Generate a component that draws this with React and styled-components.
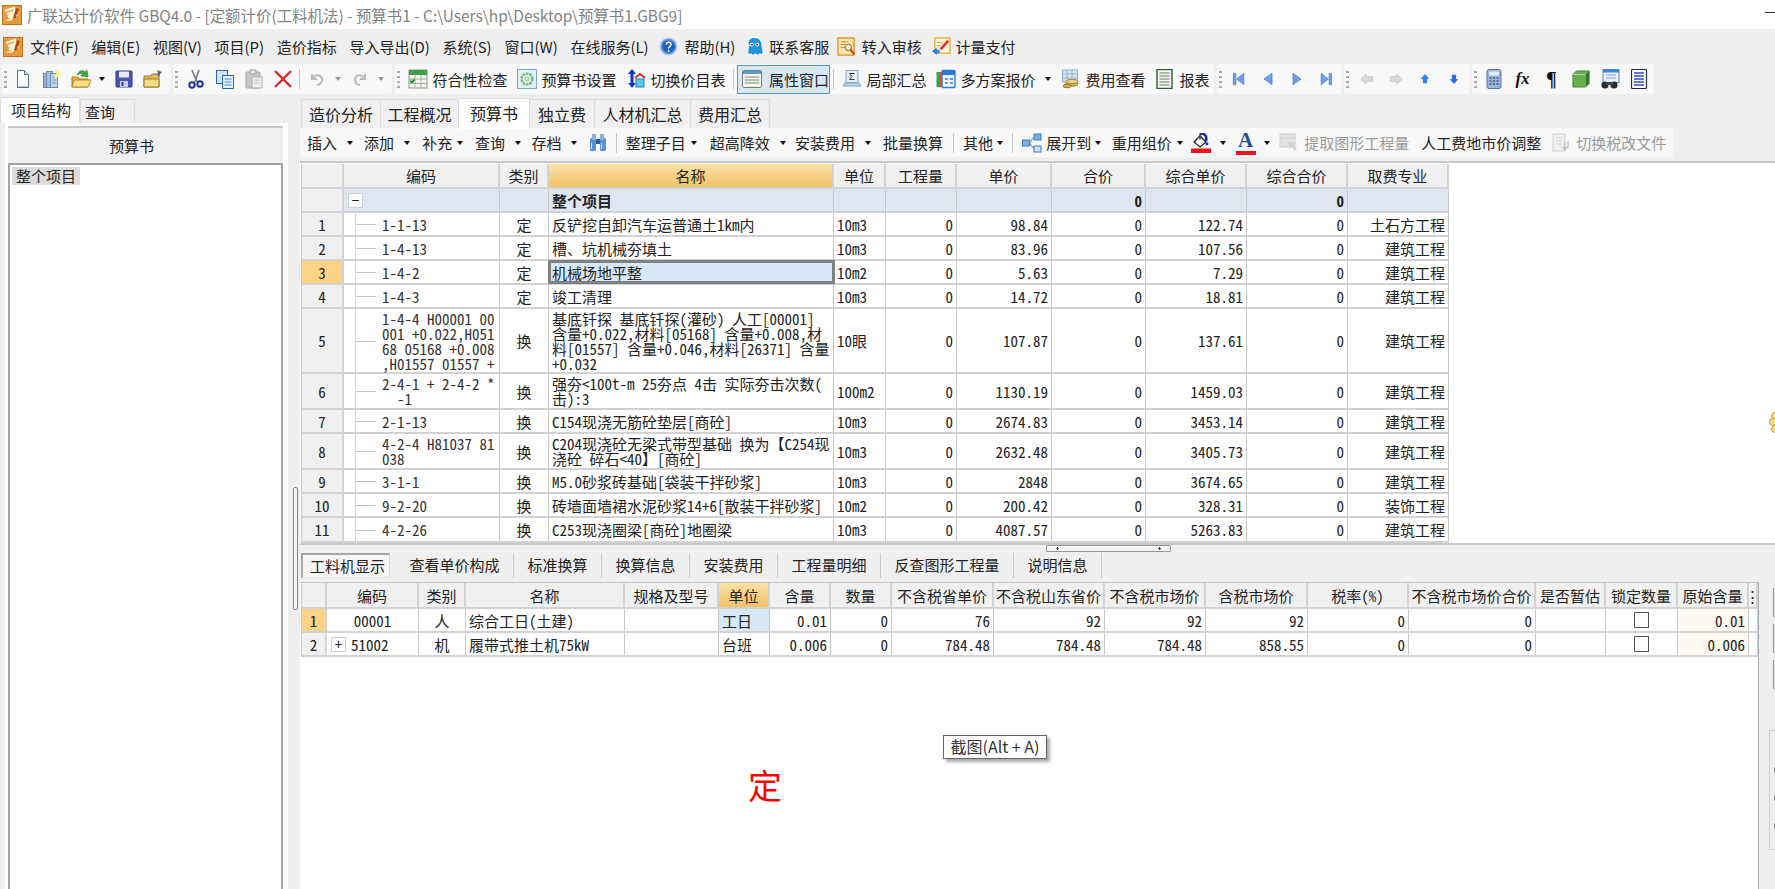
import React from "react"
import styled, { createGlobalStyle } from "styled-components"

const GlobalStyle = createGlobalStyle`
  html, body {
    margin: 0;
    padding: 0;
    background: #efefef;
  }
  * {
    box-sizing: border-box;
  }
  body {
    font-family: "Noto Sans CJK SC", "Noto Sans", sans-serif;
    font-size: 15px;
    color: #222;
  }
`

const Window = styled.div`
  position: relative;
  width: 1775px;
  height: 889px;
  overflow: hidden;
  display: flex;
  flex-direction: column;
`

const TitleBar = styled.div`
  height: 29px;
  background: #fff;
  display: flex;
  align-items: center;
  padding-left: 2px;
  color: #828282;
  font-size: 15.45px;
  white-space: nowrap;
`
const TitleText = styled.span`
  margin-left: 5px;
  flex: 1;
`
const MinLine = styled.span`
  width: 10px;
  height: 1px;
  background: #333;
  margin-bottom: 4px;
`

const MenuBar = styled.div`
  height: 35px;
  display: flex;
  align-items: center;
  padding-left: 3px;
  gap: 12.7px;
  white-space: nowrap;
`
const MenuItem = styled.span`
  display: flex;
  align-items: center;
  gap: ${p => p.$gap || 6}px;
  margin-left: ${p => p.$ml || 0}px;
`

const ToolRow = styled.div`
  height: 30px;
  display: flex;
  gap: 3px;
  padding-left: 2px;
  white-space: nowrap;
`
const ToolGroup = styled.div`
  height: 30px;
  display: flex;
  align-items: center;
  background: #f8f8f8;
  border-radius: 3px;
  width: ${p => p.$w}px;
`
const Grip = styled.i`
  width: ${p => p.$w || 7}px;
  height: 18px;
  flex: none;
  background: radial-gradient(circle at 2.5px 2px, #a8a8a8 1.2px, transparent 1.4px) 1px 0 / 5px 5px repeat-y;
`
const IconBtn = styled.span`
  width: ${p => p.$w || 29}px;
  height: 26px;
  flex: none;
  display: flex;
  align-items: center;
  justify-content: center;
`
const ToolText = styled.span`
  display: flex;
  align-items: center;
  gap: ${p => p.$gap || 5}px;
  padding: 0 4.5px;
`
const ActiveTool = styled.span`
  height: 29px;
  width: 94px;
  display: flex;
  align-items: center;
  gap: 7px;
  padding-left: 4px;
  background: #d8e8f6;
  border: 1px solid #4f97d8;
`
const ToolSep = styled.i`
  width: 1px;
  height: 20px;
  background: #c6c6c6;
  flex: none;
  margin: 0 ${p => p.$m || 3}px;
`
const Caret = styled.i`
  width: 0;
  height: 0;
  flex: none;
  border-left: 3.5px solid transparent;
  border-right: 3.5px solid transparent;
  border-top: 4px solid ${p => (p.$off ? "#999" : "#111")};
`

const Body = styled.div`
  flex: 1;
  display: flex;
  min-height: 0;
`

const LeftPane = styled.div`
  width: 292px;
  flex: none;
  display: flex;
  flex-direction: column;
  padding-top: 3px;
`
const LeftTabs = styled.div`
  height: 26px;
  display: flex;
  align-items: flex-end;
`
const LeftTab = styled.div`
  height: ${p => (p.$active ? 26 : 24)}px;
  width: ${p => p.$w}px;
  background: ${p => (p.$active ? "#fff" : "#f0f0f0")};
  border: 1px solid #dcdcdc;
  border-bottom: 0;
  padding-left: ${p => (p.$active ? 10 : 4)}px;
  line-height: 23px;
`
const LeftPanel = styled.div`
  flex: 1;
  width: 288px;
  padding: 3px 5px 0 8px;
  background: linear-gradient(#fff, #fff) 5px 0 / 283px 100% no-repeat;
  display: flex;
  flex-direction: column;
`
const PanelHead = styled.div`
  height: 37px;
  background: #f0f0f0;
  border-top: 2px solid #c8c8c8;
  text-align: center;
  padding-right: 28px;
  line-height: 36px;
`
const TreeBox = styled.div`
  flex: 1;
  background: #fff;
  border: 2px solid #a4a4a4;
  border-bottom: 0;
  padding: 0 0 0 2px;
`
const TreeNode = styled.span`
  display: inline-block;
  height: 18px;
  line-height: 18px;
  padding: 0 4px;
  background: #dcdcdc;
`
const SplitCol = styled.div`
  width: 8px;
  flex: none;
  padding-top: 393px;
`
const SplitHandle = styled.div`
  width: 5px;
  height: 123px;
  margin-left: 1px;
  border: 1px solid #888;
  border-radius: 2px;
  background: #f4f4f4;
`

const MainPane = styled.div`
  flex: 1;
  min-width: 0;
  display: flex;
  flex-direction: column;
`
const TabRow = styled.div`
  height: 34px;
  padding: 3px 0 0 1px;
  display: flex;
  align-items: flex-end;
  white-space: nowrap;
`
const Tab = styled.div`
  width: ${p => p.$w}px;
  height: ${p => (p.$active ? 31 : 29)}px;
  margin-bottom: ${p => (p.$active ? -1 : 0)}px;
  font-size: 16px;
  line-height: 28px;
  text-align: center;
  background: ${p => (p.$active ? "#fff" : "#f0f0f0")};
  border: 1px solid #dcdcdc;
  border-bottom: 0;
  border-left-width: ${p => (p.$first ? 1 : 0)}px;
  position: relative;
`
const EditBar = styled.div`
  height: 29px;
  width: 1373px;
  display: flex;
  align-items: center;
  background: #f8f8f8;
  border-radius: 3px;
  padding-left: 7px;
  white-space: nowrap;
`
const EditItem = styled.span`
  display: flex;
  align-items: center;
  gap: ${p => p.$gap ?? 10}px;
  margin-right: ${p => p.$mr ?? 10}px;
  margin-left: ${p => p.$ml || 0}px;
  color: ${p => (p.$off ? "#9a9a9a" : "inherit")};
`

const UpperArea = styled.div`
  height: 382px;
  margin-top: 4px;
  background: #fff;
  border-top: 2px solid #c8c8c8;
  padding: 1px 0 0 1px;
`
const Sheet = styled.div`
  width: max-content;
  border-left: 1px solid #c8c8c8;
  font-feature-settings: "hwid" 1;
`
const Row = styled.div`
  display: grid;
  grid-template-columns: ${p => p.$cols};
  height: ${p => p.$h || 24}px;
  border-bottom: 2px solid #d2d2d2;
  line-height: 15px;
`
const Cell = styled.div`
  position: relative;
  display: flex;
  align-items: center;
  min-width: 0;
  white-space: pre;
  border-right: 1px solid #c9c9c9;
  padding: 0 3px;
  justify-content: ${p => p.$align || "flex-start"};
  background: ${p => p.$bg || "transparent"};
  font-weight: ${p => (p.$bold ? 700 : 400)};
  text-align: ${p => (p.$align === "flex-end" ? "right" : "left")};
`
const HeadCell = styled(Cell)`
  justify-content: center;
  background: ${p => (p.$active ? "linear-gradient(#fbe0a6, #f2c266)" : "#f0f0f0")};
  border-right: 2px solid #d2d2d2;
  padding: 0;
`
const NumCell = styled(Cell)`
  justify-content: center;
  background: ${p => (p.$active ? "#fdd387" : "#f0f0f0")};
  border-right: 2px solid #d2d2d2;
`
const CodeCell = styled(Cell)`
  padding-left: ${p => p.$pad}px;
  color: #333;
  &::before {
    content: "";
    position: absolute;
    left: 11px;
    top: 0;
    bottom: -2px;
    border-left: 1px solid #d6d6d6;
  }
  &::after {
    content: "";
    position: absolute;
    left: 12px;
    width: 20px;
    top: 50%;
    border-top: 1px solid #c4c4c4;
  }
`
const SelectedCell = styled(Cell)`
  background: #d6e8f8;
  outline: 3px solid #808080;
  outline-offset: -2px;
  z-index: 1;
`
const ToggleBox = styled.span`
  width: 15px;
  height: 15px;
  flex: none;
  background: #fff;
  border: 1px solid #c8d0da;
  display: flex;
  align-items: center;
  justify-content: center;
  font-size: 14px;
  line-height: 1;
  margin-left: ${p => p.$ml || 0}px;
  margin-right: ${p => p.$mr || 0}px;
`
const CheckBox = styled.span`
  width: 15px;
  height: 16px;
  border: 1px solid #555;
  background: #fff;
`

const LowerArea = styled.div`
  flex: 1;
  display: flex;
  border-top: 2px solid #c8c8c8;
  min-height: 0;
`
const LowerCol = styled.div`
  width: 1459px;
  display: flex;
  flex-direction: column;
`
const SplitBar = styled.div`
  height: 8px;
`
const SplitGrip = styled.div`
  width: 125px;
  height: 7px;
  margin-left: 746px;
  background:
    radial-gradient(circle, #446 1px, transparent 1.2px) 8px 0 / 5px 5px no-repeat,
    radial-gradient(circle, #446 1px, transparent 1.2px) 110px 0 / 5px 5px no-repeat,
    #f4f4f4;
  border: 1px solid #999;
  border-radius: 1px;
`
const LowTabs = styled.div`
  height: 25px;
  display: flex;
  align-items: stretch;
  padding-left: 1px;
  white-space: nowrap;
`
const LowTab = styled.div`
  padding: 0 13.5px;
  line-height: 24px;
  border-right: 1px solid #c8c8c8;
`
const LowTabActive = styled.div`
  width: 89px;
  margin-right: 6px;
  padding-left: 7px;
  line-height: 22px;
  background: #f7f7f7;
  border-top: 2px solid #a8a8a8;
  border-left: 2px solid #a8a8a8;
  border-right: 1px solid #d8d8d8;
  border-bottom: 1px solid #e4e4e4;
`
const LowerSheet = styled.div`
  flex: 1;
  margin-top: 4px;
  background: #fff;
  border-top: 1px solid #c4c4c4;
  border-right: 1px solid #a9b1b9;
  padding-left: 1px;
`
const RightStrip = styled.div`
  flex: 1;
  padding: 43px 0 0 10px;
  display: flex;
  flex-direction: column;
  overflow: hidden;
`
const StripBar = styled.i`
  display: block;
  width: 6px;
  height: 29px;
  flex: none;
  margin: 0 0 7px 4px;
  background: #dcdcdc;
  border-left: 1px solid #9a9a9a;
`
const StripPanel = styled.div`
  margin-top: 34px;
  height: 120px;
  border: 1px solid #cfcfcf;
  border-right: 0;
  padding: 33px 0 0 4px;
  display: flex;
  flex-direction: column;
  gap: 16px;
`
const StripDot = styled.i`
  width: 12px;
  height: 12px;
  flex: none;
  border-radius: 50%;
  border: 1px solid #777;
`

const Tooltip = styled.div`
  position: absolute;
  left: 943px;
  top: 735px;
  width: 104px;
  height: 24px;
  background: #fff;
  border: 1px solid #666;
  box-shadow: 3px 3px 3px #aaa;
  line-height: 21px;
  text-align: center;
  font-size: 16px;
  color: #333;
`
const BigMark = styled.div`
  position: absolute;
  left: 748px;
  top: 762px;
  font-size: 34px;
  line-height: 46px;
  color: #f00;
`
const EdgeFlower = styled.svg`
  position: absolute;
  left: 1769px;
  top: 411px;
  width: 10px;
  height: 26px;
`

const Ico = styled.svg`
  width: ${p => p.$s || 20}px;
  height: ${p => p.$s || 20}px;
  flex: none;
`
const Sym = styled.span`
  width: 18px;
  text-align: center;
  font-family: "Liberation Serif", serif;
  font-size: ${p => p.$size}px;
  font-style: ${p => (p.$it ? "italic" : "normal")};
  font-weight: 700;
  color: #111;
  line-height: 20px;
`
const ColorA = styled.span`
  width: 20px;
  height: 24px;
  text-align: center;
  font-family: "Liberation Serif", serif;
  font-size: 21px;
  font-weight: 700;
  line-height: 19px;
  color: #2a4c8c;
  border-bottom: 4px solid #e8141c;
`

const icons = {
  logo: <>
    <rect x="0.5" y="0.5" width="19" height="19" fill="#e59a3f" stroke="#c96d1c" />
    <path d="M3 6l9-3 1 3-8 3 8-1-7 4 7-1-5 4" fill="none" stroke="#fff4d8" strokeWidth="2.2" />
    <path d="M14 3l3 1-4 10-2-1z" fill="#a44b14" />
    <path d="M3 16l4-3 2 3z" fill="#f8e0b0" />
  </>,
  help: <>
    <circle cx="10" cy="10" r="8.8" fill="#5d8fd6" stroke="#b6cdea" strokeWidth="1.4" />
    <circle cx="10" cy="10" r="6.4" fill="#1f5fbf" />
    <path d="M7.6 8c.2-3.4 5-3.2 5 0 0 2-2.4 1.8-2.4 4" fill="none" stroke="#fff" strokeWidth="1.6" />
    <circle cx="10.2" cy="14.4" r="1" fill="#fff" />
  </>,
  qq: <>
    <path d="M10 1c5 0 7.400 3.400 7.400 8 0 3 1.600 5 1 8-1.200 1.400-2.400 0-3.400 0-.8 1.600-2 2-2.600 1-1-1-1.800-1-2.800 0-.8 1-2 .6-2.600-1-1 0-2.200 1.400-3.400 0-.6-3 1-5 1-8C2.600 4.400 5 1 10 1z" fill="#1e93dc" />
    <circle cx="7.200" cy="8" r="2" fill="#fff" /><circle cx="12.800" cy="8" r="2" fill="#fff" />
    <circle cx="7.400" cy="8" r="1" fill="#123" /><circle cx="12.600" cy="8" r="1" fill="#123" />
  </>,
  audit: <>
    <rect x="1" y="1" width="17" height="18" fill="#fbe6b0" stroke="#e08a2c" strokeWidth="1.400" />
    <path d="M4 5h8M4 8h6M4 11h5" stroke="#b9894a" />
    <circle cx="12" cy="11" r="3.200" fill="#fff8e0" stroke="#c9762a" strokeWidth="1.200" />
    <path d="M14 13l4 5" stroke="#b3471c" strokeWidth="2.200" />
  </>,
  pay: <>
    <rect x="3" y="1" width="16" height="16" fill="#fff6d8" stroke="#e6a83c" strokeWidth="1.400" />
    <path d="M8 12l8-9 2 2-8 9z" fill="#d8382c" />
    <path d="M5 6h6M5 9h4" stroke="#c9a76a" />
    <path d="M0 15l5-4v2.500h3v3.500H5V19z" fill="#2f7fd8" />
  </>,
  page: <>
    <path d="M4.500 1.500h7l4 4v13h-11z" fill="#fff" stroke="#54708f" />
    <path d="M11.500 1.500v4h4" fill="#dce6f2" stroke="#54708f" />
    <path d="M5.500 17.500h9" stroke="#b8c6d6" />
  </>,
  pages: <>
    <rect x="1.500" y="4.500" width="5" height="14" fill="#93aed0" stroke="#6d88aa" />
    <rect x="4.500" y="2.500" width="6" height="16" fill="#a9c0dc" stroke="#6d88aa" />
    <rect x="8.500" y="4.500" width="7" height="14" fill="#c3d4e8" stroke="#6d88aa" />
    <path d="M10 8h4M10 11h4M10 14h4" stroke="#7f9abc" />
    <path d="M15 0l1 3 3-1-2 3 3 1-3 1 1 3-3-2-2 2v-3l-2-1 3-1-1-3z" fill="#fff08a" />
  </>,
  open: <>
    <path d="M1 8h6l1 2h9v8H1z" fill="#e8b93c" stroke="#a8781c" />
    <path d="M3 11h17l-3 7H1z" fill="#fbe08a" stroke="#b98a2a" />
    <path d="M6 6C8 1 12 1 14 3l2-2 1 7-7-1 2-2c-1.500-1-4-.5-6 1z" fill="#3ea83a" stroke="#267a26" strokeWidth=".6" />
  </>,
  save: <>
    <rect x="2" y="2" width="16" height="16" rx="1" fill="#4a56b0" stroke="#2c3484" />
    <rect x="5" y="2.500" width="10" height="6" fill="#e8ecf8" />
    <rect x="6" y="12" width="8" height="6" fill="#c8cfe8" />
    <rect x="7.500" y="13" width="2" height="4" fill="#2c3484" />
  </>,
  folder: <>
    <path d="M1 7h7l1-2h7v13H1z" fill="#e4bb56" stroke="#9a7b2a" />
    <path d="M1 10h15v8H1z" fill="#f4d98c" stroke="#9a7b2a" />
    <path d="M14 1l5 2-2 2-1 3-2-3 1-1z" fill="#5a6470" />
  </>,
  cut: <>
    <path d="M6 1l5 12M13 1l-4 12" stroke="#7c838c" strokeWidth="1.800" />
    <circle cx="6" cy="16" r="2.700" fill="none" stroke="#1c3a8c" strokeWidth="2" />
    <circle cx="14" cy="15" r="2.700" fill="none" stroke="#1c3a8c" strokeWidth="2" />
  </>,
  copy: <>
    <rect x="1.500" y="1.500" width="11" height="13" fill="#cfe2f8" stroke="#2f66b0" />
    <rect x="7.500" y="6.500" width="11" height="13" fill="#e6f0fb" stroke="#2f66b0" />
    <path d="M9.500 10h7M9.500 13h7M9.500 16h7" stroke="#3d86d8" />
  </>,
  paste: <>
    <rect x="2" y="3" width="14" height="16" rx="1" fill="#c8c8c8" stroke="#a2a2a2" />
    <rect x="6" y="1" width="6" height="4" fill="#e0e0e0" stroke="#a2a2a2" />
    <rect x="8" y="8" width="10" height="11" fill="#f0f0f0" stroke="#b0b0b0" />
    <path d="M10 11h6M10 14h6" stroke="#c4c4c4" />
  </>,
  del: <path d="M2 2l16 16M18 2L2 18" stroke="#d8282c" strokeWidth="2.400" />,
  undo: <path d="M5 5v5h5M5 10c3-5 9-5 10 0 .5 3-2 6-5 6" fill="none" stroke="#bdbdbd" strokeWidth="2.200" />,
  redo: <path d="M15 5v5h-5M15 10c-3-5-9-5-10 0-.5 3 2 6 5 6" fill="none" stroke="#bdbdbd" strokeWidth="2.200" />,
  check: <>
    <rect x="1" y="1" width="18" height="18" fill="#f4f4f0" stroke="#8a9488" />
    <rect x="1" y="1" width="18" height="5" fill="#3ea04a" />
    <path d="M7 6v13M13 6v13M1 10h18M1 14.500h18" stroke="#a8aca4" />
    <rect x="1.500" y="10" width="5" height="4.500" fill="#9ad088" />
    <path d="M2.500 12l1.500 1.500 2.500-3" fill="none" stroke="#207828" strokeWidth="1.200" />
  </>,
  setting: <>
    <rect x="0.500" y="0.500" width="19" height="19" fill="#e4eef8" stroke="#7ea6cf" />
    <circle cx="10" cy="10" r="5.400" fill="none" stroke="#74b86c" strokeWidth="2.400" strokeDasharray="2.400 1" />
    <circle cx="10" cy="10" r="2" fill="none" stroke="#8ccc80" />
  </>,
  swap: <>
    <path d="M6 0l4 5H7.500v9H10l-4 5-4-5h2.500V5H2z" fill="#1436b8" />
    <path d="M9 9l5-4 5 4" fill="none" stroke="#d8282c" strokeWidth="1.800" />
    <rect x="10" y="10" width="8" height="8" fill="#5ac8e8" stroke="#2a7ab0" />
  </>,
  props: <>
    <rect x="0.500" y="1.500" width="19" height="17" rx="1" fill="#f4f4e8" stroke="#6e7e70" />
    <rect x="1" y="2" width="18" height="3" fill="#5c9ad8" />
    <path d="M3 8h14M3 11h14M3 14h14" stroke="#7f8a78" />
  </>,
  sum: <>
    <rect x="4" y="1.500" width="12" height="12" fill="#e8eef6" stroke="#8ba4c0" />
    <path d="M12.500 4.500H7.500l2.500 3-2.500 3h5" fill="none" stroke="#303848" />
    <path d="M1 17l2-3h14l2 3z" fill="#b8dcee" stroke="#7aa8c4" />
  </>,
  plans: <>
    <rect x="0.500" y="3" width="4" height="15" fill="#2fa84a" />
    <rect x="3" y="3" width="4" height="15" fill="#e24a3a" />
    <rect x="6" y="1.500" width="13" height="17" rx="1" fill="#f0f6ff" stroke="#2e78d8" strokeWidth="1.400" />
    <rect x="6" y="2" width="13" height="4" fill="#2e78d8" />
    <path d="M9 9h3v2H9zM14 9h3v2h-3zM9 13h3v2H9zM14 13h3v2h-3z" fill="#5a9ae6" />
  </>,
  fees: <>
    <rect x="1.500" y="1" width="15" height="12" fill="#d6e6f6" stroke="#90aac8" />
    <path d="M6 1v12M11 1v12M1.500 5h15M1.500 9h15" stroke="#9ab4d0" />
    <ellipse cx="11" cy="15" rx="6" ry="2.200" fill="#d8b860" stroke="#9a7c2c" />
    <ellipse cx="11" cy="12.500" rx="6" ry="2.200" fill="#ecd080" stroke="#9a7c2c" />
    <ellipse cx="6" cy="17" rx="4" ry="1.800" fill="#d0ac50" stroke="#9a7c2c" />
  </>,
  report: <>
    <rect x="2" y="0.500" width="15" height="19" fill="#f6f6ee" stroke="#2c5c38" strokeWidth="1.400" />
    <path d="M4.500 4h10M4.500 7h10M4.500 10h10M4.500 13h10M4.500 16h10" stroke="#6a7a6a" />
  </>,
  first: <path d="M3 3h3v14H3zM16 3v14L7 10z" fill="#6f9fe4" stroke="#4b80cf" />,
  prev: <path d="M15 3v14L5 10z" fill="#6f9fe4" stroke="#4b80cf" />,
  next: <path d="M5 3v14l10-7z" fill="#6f9fe4" stroke="#4b80cf" />,
  last: <path d="M14 3h3v14h-3zM4 3v14l9-7z" fill="#6f9fe4" stroke="#4b80cf" />,
  left: <path d="M2 10l7-6v3h8v6H9v3z" fill="#d8d8d8" stroke="#c8c8c8" />,
  right: <path d="M18 10l-7-6v3H3v6h8v3z" fill="#d8d8d8" stroke="#c8c8c8" />,
  up: <path d="M10 3l6 7h-3v6H7v-6H4z" fill="#2e7fe8" />,
  down: <path d="M10 17l6-7h-3V4H7v6H4z" fill="#2e6ed8" />,
  calc: <>
    <rect x="3" y="0.500" width="14" height="19" rx="2" fill="#9ab6dc" stroke="#56739c" />
    <rect x="5" y="2.500" width="10" height="4" fill="#dfe9f6" />
    <path d="M5.500 9h2M9 9h2M12.500 9h2M5.500 12h2M9 12h2M12.500 12h2M5.500 15h2M9 15h2M12.500 15h2" stroke="#3c5274" strokeWidth="1.600" />
  </>,
  cube: <>
    <path d="M1 5l4-4h14v14l-4 4H1z" fill="#66b04e" stroke="#4a7c46" />
    <path d="M1 5h14v14" fill="none" stroke="#bde0a8" />
    <path d="M15 5l4-4v14l-4 4z" fill="#2f7a2a" />
  </>,
  viewer: <>
    <rect x="3" y="0.500" width="16" height="13" fill="#eaf2fb" stroke="#5f86bc" />
    <rect x="3" y="0.500" width="16" height="3" fill="#3f82dc" />
    <path d="M6 6h10M6 9h10" stroke="#7ea0c8" />
    <circle cx="5" cy="16" r="3.600" fill="#2c2c2c" /><circle cx="14" cy="16" r="3.600" fill="#2c2c2c" />
    <rect x="6" y="13" width="7" height="3" fill="#444" />
  </>,
  list: <>
    <rect x="2.500" y="0.500" width="15" height="19" rx="1" fill="#fff" stroke="#222c48" strokeWidth="1.200" />
    <path d="M5 4h10M5 7h10M5 10h10M5 13h10M5 16h10" stroke="#2f4cb0" strokeWidth="1.300" />
  </>,
  binoc: <>
    <rect x="2" y="5" width="6" height="13" rx="1.500" fill="#5b8fd6" />
    <rect x="12" y="5" width="6" height="13" rx="1.500" fill="#5b8fd6" />
    <rect x="4" y="1" width="4" height="6" fill="#88b0e6" /><rect x="12" y="1" width="4" height="6" fill="#88b0e6" />
    <rect x="8" y="6" width="4" height="5" fill="#2c5a9c" />
    <path d="M3.500 10v6M13.500 10v6" stroke="#d0e2f8" />
  </>,
  tree: <>
    <rect x="0.500" y="7" width="7" height="6" fill="#7ab0e8" stroke="#3f7cc4" />
    <rect x="12" y="1" width="7" height="6" fill="#7ab0e8" stroke="#3f7cc4" />
    <rect x="12" y="13" width="7" height="6" fill="#cfe2f8" stroke="#3f7cc4" />
    <path d="M7.500 10L12 4M7.500 10L12 16" stroke="#3f7cc4" />
  </>,
  fill: <>
    <path d="M3 9l6-6 6 6-6 5z" fill="#fff" stroke="#222" strokeWidth="1.300" />
    <path d="M9 0v7" stroke="#222" />
    <path d="M9 1c5-1 7 2 6 7" fill="none" stroke="#1030a8" strokeWidth="2.600" />
    <circle cx="16" cy="11" r="1.400" fill="#1030a8" />
    <rect x="0" y="15.500" width="20" height="4.500" fill="#e8141c" />
  </>,
  graphOff: <>
    <rect x="1" y="1" width="15" height="13" fill="#e4e4e4" stroke="#d0d0d0" />
    <path d="M1 5h15" stroke="#cfcfcf" />
    <path d="M8 8l9 2-2 2 3 4-2 2-3-4-2 2z" fill="#d4d4d4" />
  </>,
  taxOff: <>
    <rect x="2" y="1" width="12" height="17" fill="#f0f0f0" stroke="#cfcfcf" />
    <path d="M5 5h6M5 8h6M5 11h6" stroke="#d0d0d0" />
    <path d="M14 9v7M11.500 14l2.500 3 2.500-3M17 8v7" fill="none" stroke="#c4c4c4" strokeWidth="1.400" />
  </>,
}

const Icon = ({ name, size }) => (
  <Ico viewBox="0 0 20 20" $s={size}>{icons[name]}</Ico>
)

const upperCols = "42px 156px 49px 285px 52px 71px 95px 94px 101px 101px 101px"
const lowerCols = "25px 92px 47px 159px 94px 51px 61px 61px 102px 111px 101px 102px 101px 127px 70px 72px 71px 9px"

const upperHead = ["", "编码", "类别", "名称", "单位", "工程量", "单价", "合价", "综合单价", "综合合价", "取费专业"]
const lowerHead = ["", "编码", "类别", "名称", "规格及型号", "单位", "含量", "数量", "不含税省单价", "不含税山东省价", "不含税市场价", "含税市场价", "税率(%)", "不含税市场价合价", "是否暂估", "锁定数量", "原始含量", "⋮"]

const rows = [
  { no: 1, code: "1-1-13", kind: "定", name: "反铲挖自卸汽车运普通土1km内", unit: "10m3", price: "98.84", full: "122.74", major: "土石方工程" },
  { no: 2, code: "1-4-13", kind: "定", name: "槽、坑机械夯填土", unit: "10m3", price: "83.96", full: "107.56", major: "建筑工程" },
  { no: 3, code: "1-4-2", kind: "定", name: "机械场地平整", unit: "10m2", price: "5.63", full: "7.29", major: "建筑工程", selected: true },
  { no: 4, code: "1-4-3", kind: "定", name: "竣工清理", unit: "10m3", price: "14.72", full: "18.81", major: "建筑工程" },
  {
    no: 5, h: 65, kind: "换", unit: "10眼", price: "107.87", full: "137.61", major: "建筑工程",
    code: "1-4-4 H00001 00\n001 +0.022,H051\n68 05168 +0.008\n,H01557 01557 +",
    name: "基底钎探 基底钎探(灌砂) 人工[00001]\n含量+0.022,材料[05168] 含量+0.008,材\n料[01557] 含量+0.046,材料[26371] 含量\n+0.032",
  },
  {
    no: 6, h: 36, kind: "换", unit: "100m2", price: "1130.19", full: "1459.03", major: "建筑工程",
    code: "2-4-1 + 2-4-2 *\n  -1",
    name: "强夯<100t-m 25夯点 4击 实际夯击次数(\n击):3",
  },
  { no: 7, code: "2-1-13", kind: "换", name: "C154现浇无筋砼垫层[商砼]", unit: "10m3", price: "2674.83", full: "3453.14", major: "建筑工程" },
  {
    no: 8, h: 36, kind: "换", unit: "10m3", price: "2632.48", full: "3405.73", major: "建筑工程",
    code: "4-2-4 H81037 81\n038",
    name: "C204现浇砼无梁式带型基础 换为【C254现\n浇砼 碎石<40】[商砼]",
  },
  { no: 9, code: "3-1-1", kind: "换", name: "M5.0砂浆砖基础[袋装干拌砂浆]", unit: "10m3", price: "2848", full: "3674.65", major: "建筑工程" },
  { no: 10, code: "9-2-20", kind: "换", name: "砖墙面墙裙水泥砂浆14+6[散装干拌砂浆]", unit: "10m2", price: "200.42", full: "328.31", major: "装饰工程" },
  { no: 11, h: 25, code: "4-2-26", kind: "换", name: "C253现浇圈梁[商砼]地圈梁", unit: "10m3", price: "4087.57", full: "5263.83", major: "建筑工程" },
]

const END = "flex-end"
const MID = "center"
const PALE = "#fdf8f0"

const UpperSheet = () => (
  <Sheet>
    <Row $cols={upperCols} $h={25}>
      {upperHead.map((t, i) => <HeadCell key={i} $active={t === "名称"}>{t}</HeadCell>)}
    </Row>
    <Row $cols={upperCols}>
      <NumCell />
      <Cell $bg="#dfe6f0"><ToggleBox $ml={1}>−</ToggleBox></Cell>
      <Cell $bg="#dfe6f0" />
      <Cell $bg="#dfe6f0" $bold>整个项目</Cell>
      <Cell $bg="#dfe6f0" />
      <Cell $bg="#dfe6f0" />
      <Cell $bg="#dfe6f0" />
      <Cell $bg="#dfe6f0" $align={END} $bold>0</Cell>
      <Cell $bg="#dfe6f0" />
      <Cell $bg="#dfe6f0" $align={END} $bold>0</Cell>
      <Cell $bg="#dfe6f0" />
    </Row>
    {rows.map(r => {
      const NameCell = r.selected ? SelectedCell : Cell
      return (
        <Row key={r.no} $cols={upperCols} $h={r.h}>
          <NumCell $active={r.selected}>{r.no}</NumCell>
          <CodeCell $pad={38}>{r.code}</CodeCell>
          <Cell $align={MID}>{r.kind}</Cell>
          <NameCell>{r.name}</NameCell>
          <Cell>{r.unit}</Cell>
          <Cell $align={END}>0</Cell>
          <Cell $align={END}>{r.price}</Cell>
          <Cell $align={END}>0</Cell>
          <Cell $align={END}>{r.full}</Cell>
          <Cell $align={END}>0</Cell>
          <Cell $align={END}>{r.major}</Cell>
        </Row>
      )
    })}
  </Sheet>
)

const lowerRows = [
  { no: 1, code: "00001", kind: "人", name: "综合工日(土建)", unit: "工日", qty: "0.01", vals: ["76", "92", "92", "92"], active: true },
  { no: 2, code: "51002", kind: "机", name: "履带式推土机75kW", unit: "台班", qty: "0.006", vals: ["784.48", "784.48", "784.48", "858.55"], toggle: true },
]

const LowerGrid = () => (
  <LowerSheet>
    <Sheet>
      <Row $cols={lowerCols} $h={26}>
        {lowerHead.map((t, i) => <HeadCell key={i} $active={t === "单位"}>{t}</HeadCell>)}
      </Row>
      {lowerRows.map(r => (
        <Row key={r.no} $cols={lowerCols}>
          <NumCell $active={r.active}>{r.no}</NumCell>
          <Cell $align={r.toggle ? "flex-start" : MID}>
            {r.toggle && <ToggleBox $ml={1} $mr={5}>+</ToggleBox>}
            {r.code}
          </Cell>
          <Cell $align={MID}>{r.kind}</Cell>
          <Cell>{r.name}</Cell>
          <Cell />
          <Cell $bg={r.active ? "#d6e8f8" : undefined}>{r.unit}</Cell>
          <Cell $align={END}>{r.qty}</Cell>
          <Cell $align={END}>0</Cell>
          {r.vals.map((v, i) => <Cell key={i} $align={END}>{v}</Cell>)}
          <Cell $align={END}>0</Cell>
          <Cell $align={END}>0</Cell>
          <Cell />
          <Cell $align={MID}><CheckBox /></Cell>
          <Cell $align={END} $bg={PALE}>{r.qty}</Cell>
          <Cell />
        </Row>
      ))}
    </Sheet>
  </LowerSheet>
)

const App = () => (
  <Window>
    <GlobalStyle />
    <TitleBar>
      <Icon name="logo" />
      <TitleText>广联达计价软件 GBQ4.0 - [定额计价(工料机法) - 预算书1 - C:\Users\hp\Desktop\预算书1.GBG9]</TitleText>
      <MinLine />
    </TitleBar>

    <MenuBar>
      <Icon name="logo" />
      <MenuItem $ml={-5.5}>文件(F)</MenuItem>
      <MenuItem>编辑(E)</MenuItem>
      <MenuItem>视图(V)</MenuItem>
      <MenuItem>项目(P)</MenuItem>
      <MenuItem>造价指标</MenuItem>
      <MenuItem>导入导出(D)</MenuItem>
      <MenuItem>系统(S)</MenuItem>
      <MenuItem>窗口(W)</MenuItem>
      <MenuItem>在线服务(L)</MenuItem>
      <MenuItem $ml={-2}><Icon name="help" size={19} />帮助(H)</MenuItem>
      <MenuItem $ml={-3} $gap={5}><Icon name="qq" size={19} />联系客服</MenuItem>
      <MenuItem $ml={-5}><Icon name="audit" size={19} />转入审核</MenuItem>
      <MenuItem $ml={-3} $gap={5}><Icon name="pay" size={19} />计量支付</MenuItem>
    </MenuBar>

    <ToolRow>
      <ToolGroup $w={168}>
        <Grip $w={6} />
        <IconBtn><Icon name="page" /></IconBtn>
        <IconBtn><Icon name="pages" /></IconBtn>
        <IconBtn><Icon name="open" /></IconBtn>
        <IconBtn $w={14}><Caret /></IconBtn>
        <IconBtn><Icon name="save" /></IconBtn>
        <IconBtn><Icon name="folder" /></IconBtn>
      </ToolGroup>
      <ToolGroup $w={219}>
        <Grip $w={8} />
        <IconBtn><Icon name="cut" /></IconBtn>
        <IconBtn><Icon name="copy" /></IconBtn>
        <IconBtn><Icon name="paste" /></IconBtn>
        <IconBtn><Icon name="del" /></IconBtn>
        <ToolSep $m={2} />
        <IconBtn><Icon name="undo" /></IconBtn>
        <IconBtn $w={14}><Caret $off /></IconBtn>
        <IconBtn><Icon name="redo" /></IconBtn>
        <IconBtn $w={14}><Caret $off /></IconBtn>
      </ToolGroup>
      <ToolGroup $w={819}>
        <Grip $w={8} />
        <ToolText><Icon name="check" />符合性检查</ToolText>
        <ToolText><Icon name="setting" />预算书设置</ToolText>
        <ToolText><Icon name="swap" />切换价目表</ToolText>
        <ToolSep $m={3} />
        <ActiveTool><Icon name="props" />属性窗口</ActiveTool>
        <ToolSep $m={3} />
        <ToolText><Icon name="sum" />局部汇总</ToolText>
        <ToolText><Icon name="plans" />多方案报价</ToolText>
        <IconBtn $w={16}><Caret /></IconBtn>
        <ToolText><Icon name="fees" />费用查看</ToolText>
        <ToolText><Icon name="report" />报表</ToolText>
      </ToolGroup>
      <ToolGroup $w={124}>
        <Grip />
        <IconBtn><Icon name="first" size={16} /></IconBtn>
        <IconBtn><Icon name="prev" size={16} /></IconBtn>
        <IconBtn><Icon name="next" size={16} /></IconBtn>
        <IconBtn><Icon name="last" size={16} /></IconBtn>
      </ToolGroup>
      <ToolGroup $w={125}>
        <Grip $w={8} />
        <IconBtn><Icon name="left" size={16} /></IconBtn>
        <IconBtn><Icon name="right" size={16} /></IconBtn>
        <IconBtn><Icon name="up" size={14} /></IconBtn>
        <IconBtn><Icon name="down" size={14} /></IconBtn>
      </ToolGroup>
      <ToolGroup $w={182}>
        <Grip />
        <IconBtn><Icon name="calc" /></IconBtn>
        <IconBtn><Sym $size={17} $it>fx</Sym></IconBtn>
        <IconBtn><Sym $size={20}>¶</Sym></IconBtn>
        <IconBtn><Icon name="cube" size={18} /></IconBtn>
        <IconBtn><Icon name="viewer" /></IconBtn>
        <IconBtn><Icon name="list" /></IconBtn>
      </ToolGroup>
    </ToolRow>

    <Body>
      <LeftPane>
        <LeftTabs>
          <LeftTab $active $w={80}>项目结构</LeftTab>
          <LeftTab $w={55}>查询</LeftTab>
        </LeftTabs>
        <LeftPanel>
          <PanelHead>预算书</PanelHead>
          <TreeBox><TreeNode>整个项目</TreeNode></TreeBox>
        </LeftPanel>
      </LeftPane>

      <SplitCol><SplitHandle /></SplitCol>

      <MainPane>
        <TabRow>
          <Tab $first $w={80}>造价分析</Tab>
          <Tab $w={78}>工程概况</Tab>
          <Tab $active $w={71}>预算书</Tab>
          <Tab $w={65}>独立费</Tab>
          <Tab $w={96}>人材机汇总</Tab>
          <Tab $w={79}>费用汇总</Tab>
        </TabRow>

        <EditBar>
          <EditItem $mr={11}>插入<Caret /></EditItem>
          <EditItem $mr={12.3}>添加<Caret /></EditItem>
          <EditItem $gap={5} $mr={11.6}>补充<Caret /></EditItem>
          <EditItem $mr={10.5}>查询<Caret /></EditItem>
          <EditItem $mr={10.3}>存档<Caret /></EditItem>
          <Icon name="binoc" />
          <ToolSep $m={8.5} />
          <EditItem $gap={5} $mr={12.9}>整理子目<Caret /></EditItem>
          <EditItem $mr={9.3}>超高降效<Caret /></EditItem>
          <EditItem $mr={12.1}>安装费用<Caret /></EditItem>
          <EditItem $mr={0}>批量换算</EditItem>
          <ToolSep $m={9.5} />
          <EditItem $gap={4} $mr={0}>其他<Caret /></EditItem>
          <ToolSep $m={9} />
          <Icon name="tree" />
          <EditItem $gap={4} $mr={10.7} $ml={4}>展开到<Caret /></EditItem>
          <EditItem $gap={5} $mr={8}>重用组价<Caret /></EditItem>
          <EditItem $gap={9} $mr={9.7}><Icon name="fill" /><Caret /></EditItem>
          <EditItem $gap={8} $mr={9.7}><ColorA>A</ColorA><Caret /></EditItem>
          <EditItem $gap={5} $mr={12} $off><Icon name="graphOff" />提取图形工程量</EditItem>
          <EditItem $mr={10.1}>人工费地市价调整</EditItem>
          <EditItem $gap={5} $mr={0} $off><Icon name="taxOff" />切换税改文件</EditItem>
        </EditBar>

        <UpperArea><UpperSheet /></UpperArea>

        <LowerArea>
          <LowerCol>
            <SplitBar><SplitGrip /></SplitBar>
            <LowTabs>
              <LowTabActive>工料机显示</LowTabActive>
              <LowTab>查看单价构成</LowTab>
              <LowTab>标准换算</LowTab>
              <LowTab>换算信息</LowTab>
              <LowTab>安装费用</LowTab>
              <LowTab>工程量明细</LowTab>
              <LowTab>反查图形工程量</LowTab>
              <LowTab>说明信息</LowTab>
            </LowTabs>
            <LowerGrid />
          </LowerCol>
          <RightStrip>
            <StripBar />
            <StripBar />
            <StripBar />
            <StripPanel>
              <StripDot />
              <StripDot />
              <StripDot />
            </StripPanel>
          </RightStrip>
        </LowerArea>
      </MainPane>
    </Body>

    <EdgeFlower viewBox="0 0 10 26">
      <circle cx="6" cy="5" r="3.500" fill="#f4de84" stroke="#b8a050" />
      <circle cx="4" cy="11" r="3.500" fill="#f4de84" stroke="#b8a050" />
      <circle cx="6" cy="18" r="3.500" fill="#f4de84" stroke="#b8a050" />
    </EdgeFlower>
    <Tooltip>截图(Alt + A)</Tooltip>
    <BigMark>定</BigMark>
  </Window>
)

export default App
